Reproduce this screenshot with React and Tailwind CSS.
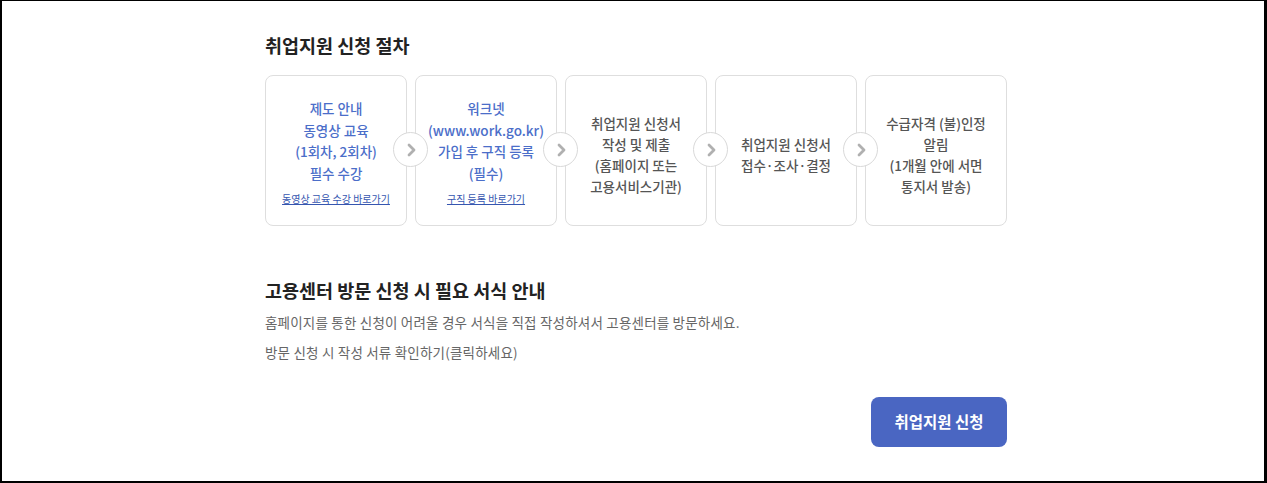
import React from "react";

const Arrow = () => (
  <div className="absolute right-[-21px] top-[57px] z-10 flex h-[35px] w-[35px] items-center justify-center rounded-full border border-[#d9d9d9] bg-white">
    <svg width="16" height="16" viewBox="0 0 16 16" fill="none">
      <path d="M6 3 L11 8 L6 13" stroke="#b0b0b0" strokeWidth="2.8" strokeLinecap="round" strokeLinejoin="round" />
    </svg>
  </div>
);

const Card = ({ lines, link, blue, arrow }) => (
  <div className="relative">
    <div className={`flex h-[151px] w-[142px] flex-col items-center justify-center rounded-[8px] border border-[#dedede] bg-white text-center ${link ? "pt-[2px]" : "pt-[9px]"}`}>
      {lines.map((l, i) => (
        <div
          key={i}
          className={`text-[13.5px] font-medium whitespace-nowrap ${link ? "leading-[21.5px]" : "leading-[21px]"} ${blue ? "text-[#4b6ec9]" : "text-[#555555]"}`}
        >
          {l}
        </div>
      ))}
      {link && (
        <div className="mt-[8px] text-[10px] leading-[13px] text-[#3656b0] underline whitespace-nowrap">
          {link}
        </div>
      )}
    </div>
    {arrow && <Arrow />}
  </div>
);

export default function App() {
  return (
    <div
      className="h-[483px] w-[1267px] border-t border-l-2 border-r-[3px] border-b-2 border-black bg-white"
      style={{ fontFamily: '"Noto Sans CJK KR", "Noto Sans", sans-serif' }}
    >
      <div className="w-[1005px] pl-[263px] pt-[32px]">
        <h2 className="text-[18.5px] font-bold leading-[24px] text-[#222222]">취업지원 신청 절차</h2>
        <div className="mt-[18px] flex gap-[8px]">
          <Card blue arrow lines={["제도 안내", "동영상 교육", "(1회차, 2회차)", "필수 수강"]} link="동영상 교육 수강 바로가기" />
          <Card blue arrow lines={["워크넷", "(www.work.go.kr)", "가입 후 구직 등록", "(필수)"]} link="구직 등록 바로가기" />
          <Card arrow lines={["취업지원 신청서", "작성 및 제출", "(홈페이지 또는", "고용서비스기관)"]} />
          <Card arrow lines={["취업지원 신청서", "접수·조사·결정"]} />
          <Card lines={["수급자격 (불)인정", "알림", "(1개월 안에 서면", "통지서 발송)"]} />
        </div>
        <h2 className="mt-[52px] text-[18.5px] font-bold leading-[24px] text-[#222222]">고용센터 방문 신청 시 필요 서식 안내</h2>
        <p className="mt-[10px] text-[13.5px] leading-[20px] text-[#666666] tracking-[0.2px]">홈페이지를 통한 신청이 어려울 경우 서식을 직접 작성하셔서 고용센터를 방문하세요.</p>
        <p className="mt-[10px] text-[13.5px] leading-[20px] text-[#666666] tracking-[0.2px]">방문 신청 시 작성 서류 확인하기(클릭하세요)</p>
        <div className="mt-[35px] flex justify-end">
          <button className="h-[50px] w-[136px] rounded-[8px] bg-[#4a66c2] text-[15.5px] font-bold text-white">취업지원 신청</button>
        </div>
      </div>
    </div>
  );
}
